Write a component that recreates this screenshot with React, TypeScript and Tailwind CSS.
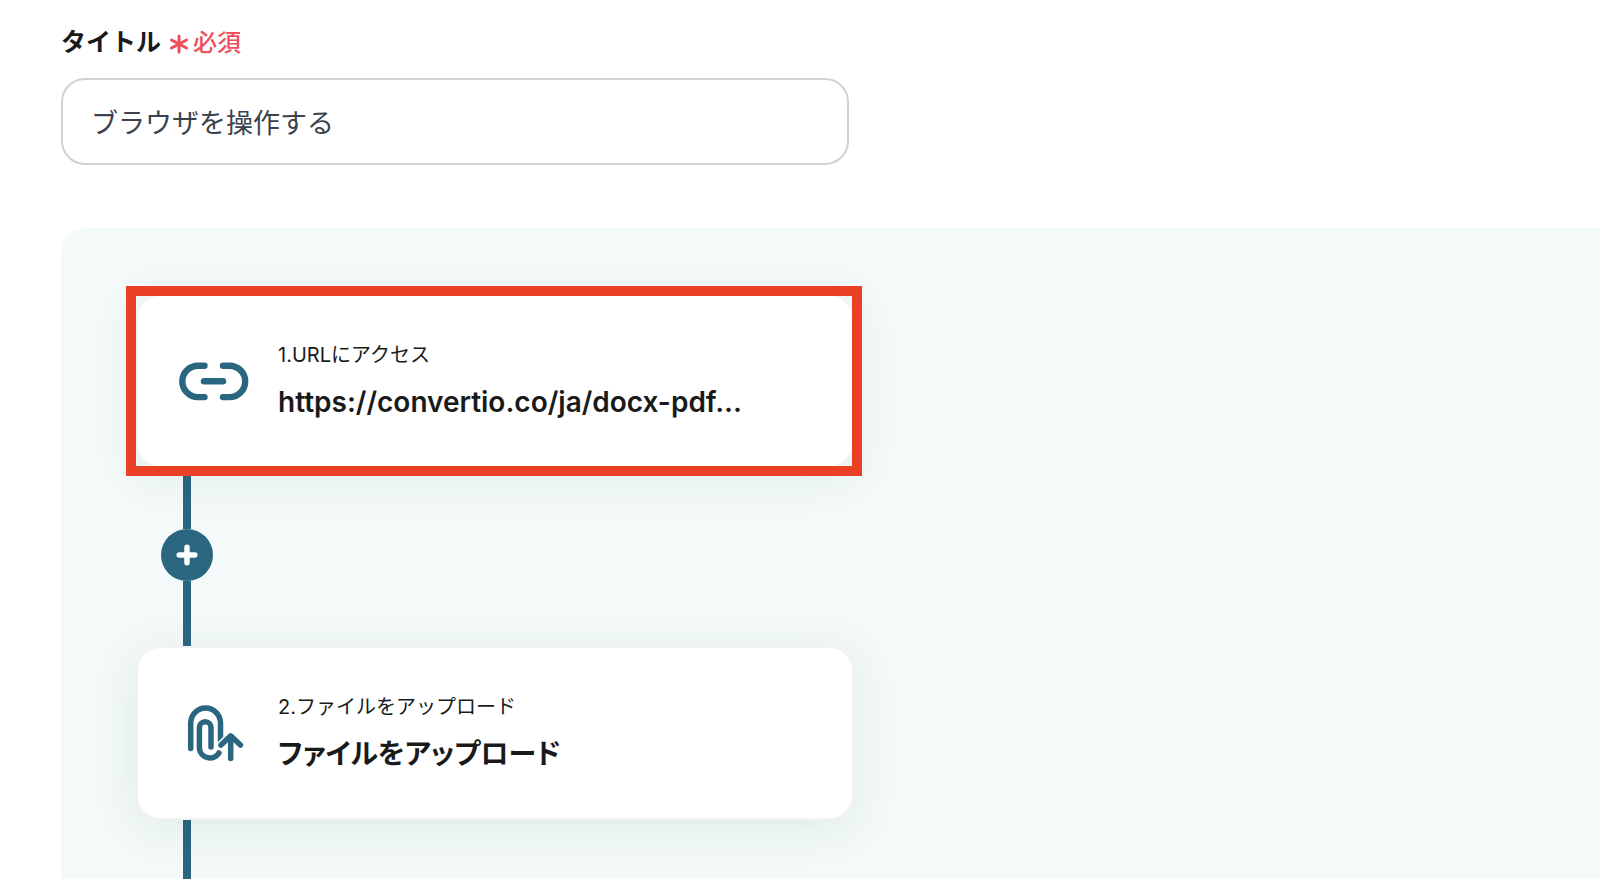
import type { ReactNode } from "react";

function LinkIcon() {
  return (
    <svg
      viewBox="178 360 72 42"
      className="h-[42px] w-[72px]"
      fill="none"
      stroke="#2b6680"
      strokeWidth="6.400"
      strokeLinecap="round"
      aria-hidden="true"
    >
      <path d="M204.500 365.700H198a15.700 15.700 0 0 0 0 31.400h6.500" />
      <path d="M223 365.700h6.500a15.700 15.700 0 0 1 0 31.400H223" />
      <path d="M204 381.300h19" />
    </svg>
  );
}

function UploadIcon() {
  return (
    <svg
      viewBox="178 702 72 62"
      className="h-[62px] w-[72px]"
      fill="none"
      stroke="#2b6680"
      strokeWidth="5.500"
      strokeLinecap="round"
      strokeLinejoin="round"
      aria-hidden="true"
    >
      <path d="M190.700 748.500V723a14.900 14.900 0 0 1 29.800 0v18" />
      <path d="M211 747v-19.500a5.800 5.800 0 0 0-11.600 0V748.500a10.600 10.600 0 0 0 19.500 4.500" />
      <path d="M221 745.500l9.700-9.700 9.700 9.700M230.700 737v21.500" stroke="#fff" strokeWidth="9" />
      <path d="M221 745l9.700-9.200 9.700 9.200M230.700 737v21.500" />
    </svg>
  );
}

type StepCardProps = {
  icon: ReactNode;
  label: string;
  title: string;
  selected?: boolean;
};

function StepCard({ icon, label, title, selected = false }: StepCardProps) {
  return (
    <div className="relative w-full max-w-[718px]">
      <div className="flex min-h-[174px] items-center gap-7 rounded-3xl border-2 border-[#f1f3f3] bg-white pr-10 pl-10 shadow-[0_8px_48px_rgba(20,50,50,0.09)]">
        <div className="flex w-[72px] shrink-0 justify-center">{icon}</div>
        <div className="min-w-0">
          <p className="text-xl leading-[30px]">{label}</p>
          <p className="mt-3 truncate text-[28px] leading-10 font-semibold [font-feature-settings:'palt']">
            {title}
          </p>
        </div>
      </div>
      {selected && (
        <div className="pointer-events-none absolute -inset-y-2 -right-2 -left-[10px] border-[10px] border-[#ea4025]" />
      )}
    </div>
  );
}

export default function App() {
  return (
    <main className="flex min-h-screen flex-col bg-white pt-5 pl-[61px] font-[Inter,'Noto_Sans_CJK_JP',sans-serif] text-[#191b1b]">
      <div className="flex h-11 items-center gap-2">
        <label htmlFor="title" className="text-[25px] leading-10 font-semibold">
          タイトル
        </label>
        <span className="flex items-center gap-1 text-2xl font-medium text-[#ee4f5b]">
          <svg
            viewBox="0 0 20 20"
            className="mt-1 size-5"
            stroke="currentColor"
            strokeWidth="3"
            strokeLinecap="round"
            aria-hidden="true"
          >
            <path d="M10 2v16M2.500 6l15 8M17.500 6l-15 8" />
          </svg>
          <span className="mt-px">必須</span>
        </span>
      </div>
      <input
        id="title"
        type="text"
        required
        defaultValue="ブラウザを操作する"
        className="mt-[14px] h-[87px] w-full max-w-[788px] rounded-3xl border-2 border-[#cdd2d9] bg-white px-7 text-[27px] text-[#3b424d] outline-none"
      />

      <section className="mt-[63px] flex flex-1 flex-col rounded-tl-3xl bg-[#f4fafa] pt-[66px] pl-[75px]">
        <StepCard
          icon={<LinkIcon />}
          label="1.URLにアクセス"
          title="https://convertio.co/ja/docx-pdf..."
          selected
        />
        <div className="ml-[25px] flex w-[52px] flex-col items-center">
          <div className="h-[61px] w-2 bg-[#2b6680]" />
          <button
            type="button"
            aria-label="ステップを追加"
            className="flex size-[52px] items-center justify-center rounded-full bg-[#2b6680]"
          >
            <svg
              viewBox="0 0 22 22"
              className="size-[22px]"
              stroke="#fff"
              strokeWidth="5.500"
              strokeLinecap="round"
              aria-hidden="true"
            >
              <path d="M11 3.200v15.600M3.200 11h15.600" />
            </svg>
          </button>
          <div className="h-[65px] w-2 bg-[#2b6680]" />
        </div>
        <StepCard
          icon={<UploadIcon />}
          label="2.ファイルをアップロード"
          title="ファイルをアップロード"
        />
        <div className="ml-[47px] w-2 flex-1 bg-[#2b6680]" />
      </section>
    </main>
  );
}
